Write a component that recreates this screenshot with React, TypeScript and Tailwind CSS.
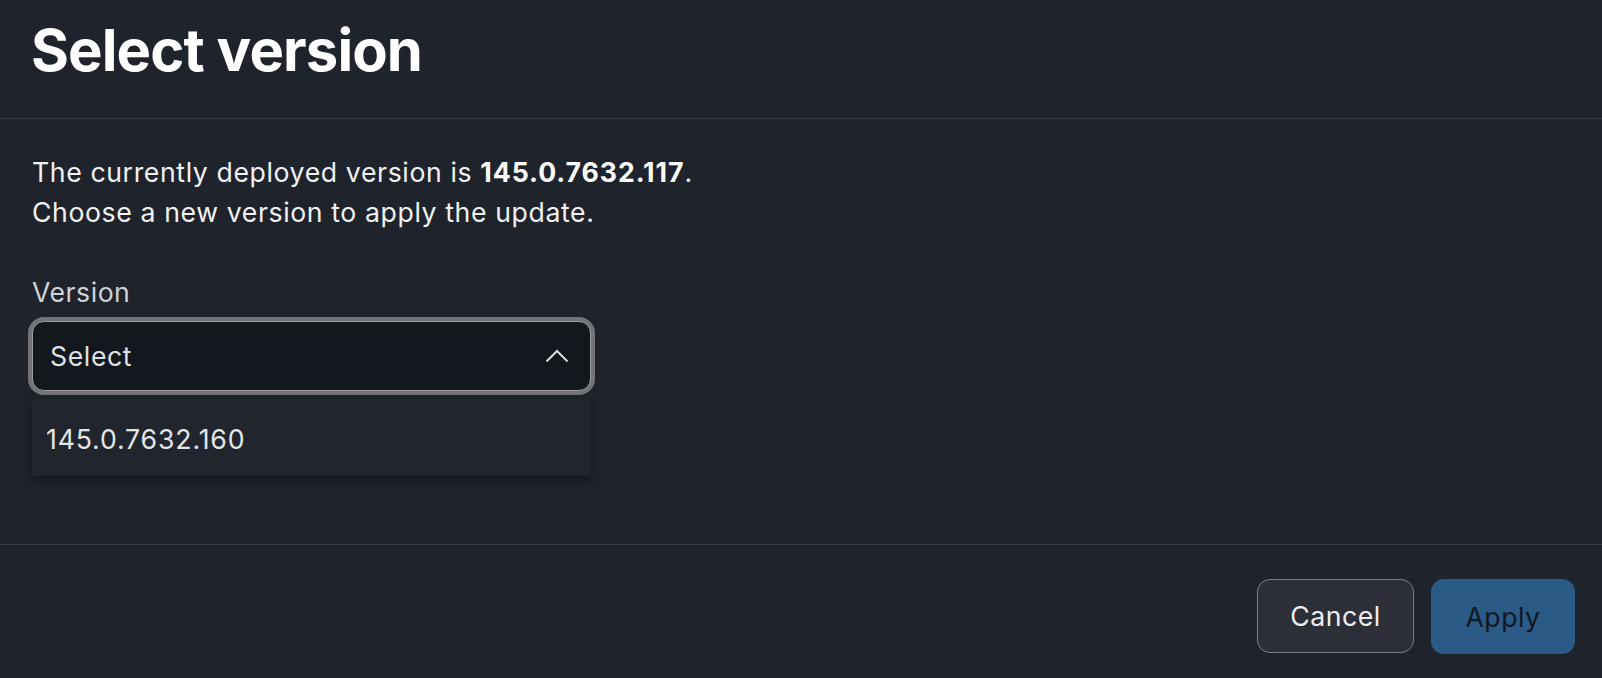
import React from "react";

export default function App() {
  return (
    <div
      className="w-full h-[678px] bg-[#1f232b] flex flex-col overflow-hidden"
      style={{ fontFamily: "Inter, 'Noto Sans', sans-serif" }}
    >
      <div className="h-[119px] shrink-0 border-b border-[#383c44] px-[31px] pt-[15px]">
        <h1 className="text-[58px] leading-[70px] font-bold text-white tracking-[-0.9px]">
          Select version
        </h1>
      </div>

      <div className="flex-1 px-[32px] pt-[33px]">
        <p className="text-[26.67px] leading-[40px] text-[#f1f2f4] tracking-[0.6px]">
          The currently deployed version is{" "}
          <span className="font-bold text-white tracking-[0.95px]">145.0.7632.117</span>.
          <br />
          Choose a new version to apply the update.
        </p>

        <div className="mt-[40px] w-[559px]">
          <div className="text-[26.67px] leading-[40px] text-[#cfd2d7] tracking-[0.5px]">Version</div>
          <div className="mt-[9px] h-[70px] rounded-[12px] border border-[#9a9ca1] ring-4 ring-[#717378] bg-[#13171e] flex items-center justify-between pl-[17px] pr-[21px]">
            <span className="text-[26.67px] leading-[40px] text-[#dfe1e4] tracking-[0.6px]">Select</span>
            <svg width="24" height="14" viewBox="0 0 24 14" fill="none">
              <path d="M1.5 12.5 L12 2 L22.5 12.5" stroke="#dadcdf" strokeWidth="2" />
            </svg>
          </div>
          <div className="mt-[8px] h-[77px] rounded-[4px] bg-[#21252d] shadow-[0_4px_10px_rgba(0,0,0,0.35)] flex items-center pl-[14px] pt-[2px]">
            <span className="text-[26.67px] leading-[40px] text-[#e3e5e8] tracking-[0.85px]">145.0.7632.160</span>
          </div>
        </div>
      </div>

      <div className="h-[134px] shrink-0 border-t border-[#383c44] flex justify-end items-start gap-[17px] pt-[34px] pr-[27px]">
        <button className="w-[157px] h-[74px] rounded-[13px] border border-[#7d7f85] bg-[#2d2f38] text-[26.67px] text-[#eceef0] tracking-[0.5px]">
          Cancel
        </button>
        <button className="w-[144px] h-[75px] rounded-[13px] bg-[#2a5a85] text-[26.67px] text-[#111823] tracking-[0.5px]">
          Apply
        </button>
      </div>
    </div>
  );
}
